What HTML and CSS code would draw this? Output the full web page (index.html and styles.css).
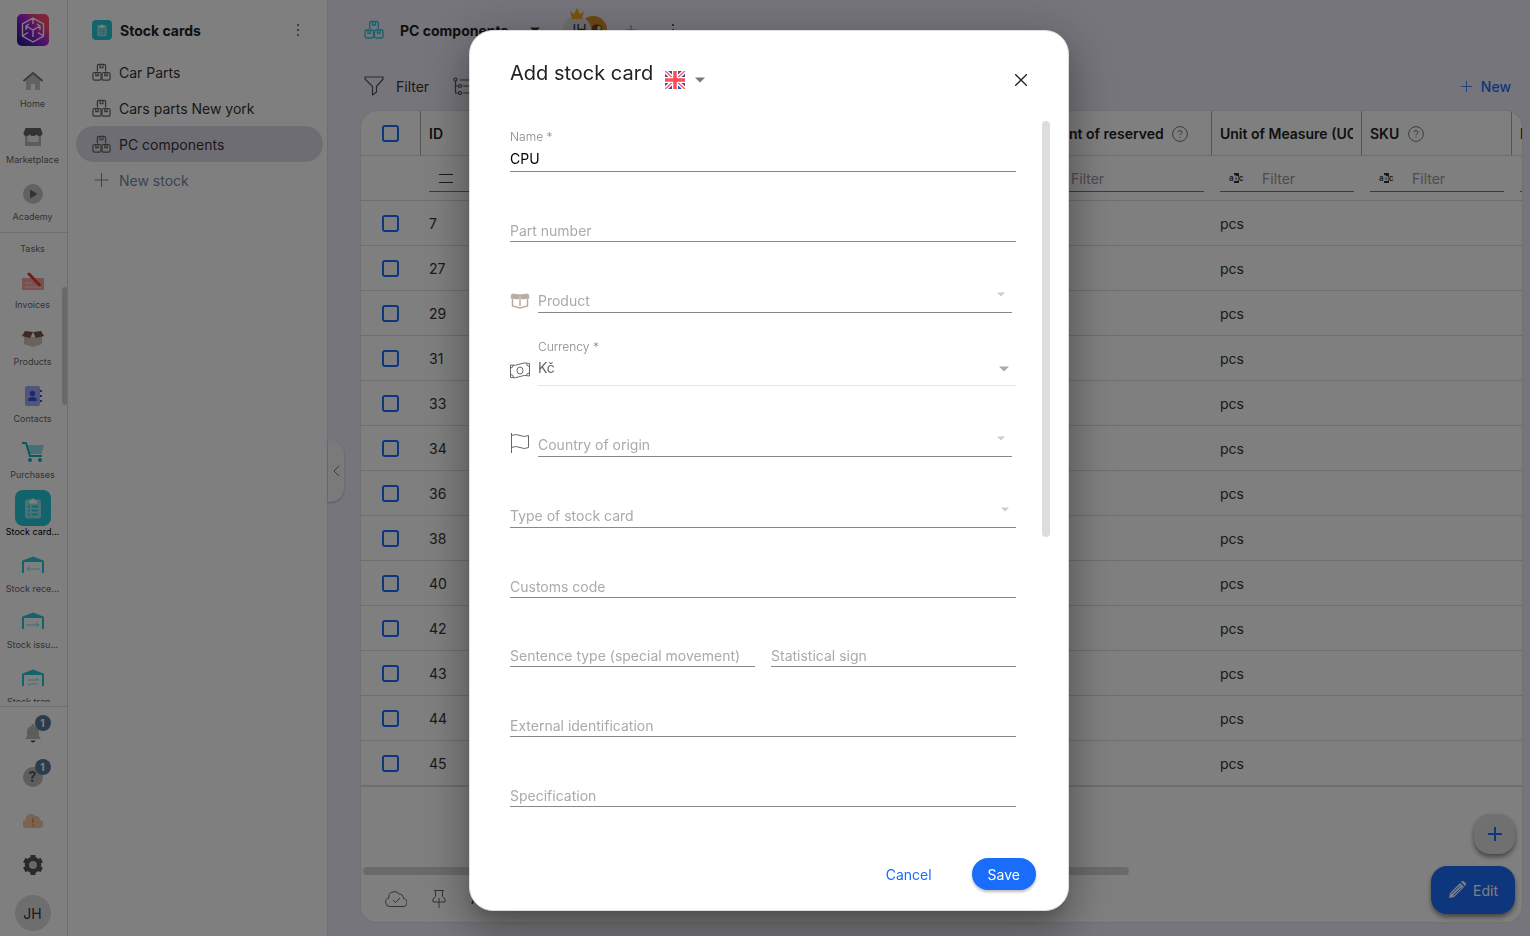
FILE: index.html
```html
<!DOCTYPE html>
<html lang="en">
<head>
  <meta charset="UTF-8" />
  <meta name="viewport" content="width=device-width, initial-scale=1.0"/>
  <title>Stock cards</title>
  <link rel="stylesheet" href="styles.css">
</head>
<body>

  <svg class="sprite" aria-hidden="true">
    <symbol id="boxes" viewBox="0 0 20 20">
      <g fill="none" stroke="currentColor" stroke-width="1.3" stroke-linejoin="round">
        <path d="M5.7 9V3q0-1.5 1.5-1.5h5.6q1.500 0 1.500 1.500v6"/>
        <path d="M8.500 1.500v3.500h3V1.500"/>
        <rect x="1" y="10" width="8.500" height="8" rx="1.500"/>
        <rect x="10.500" y="10" width="8.500" height="8" rx="1.500"/>
        <path d="M4 10v3.300h2.500V10M13.500 10v3.300H16V10"/>
      </g>
    </symbol>
    <symbol id="clipboard" viewBox="0 0 20 24">
      <rect x="2" y="3.500" width="16" height="19" rx="2" fill="#fff" fill-opacity=".5"/>
      <path d="M6 4.500h2a2 2 0 0 1 4 0h2v3H6z" fill="#fff"/>
      <path d="M5 10.500h2M5 14.500h2M5 18.500h2" stroke="#26c6da" stroke-width="1.600"/>
      <path d="M9 10.500h6M9 14.500h6M9 18.500h6" stroke="#26c6da" stroke-width="1.600"/>
    </symbol>
    <symbol id="garage" viewBox="0 0 22 18">
      <path d="M1 17V5.500L11 1.500l10 4V17" fill="none" stroke="#26c6da" stroke-width="2"/>
      <path d="M1 6l10-5 10 5z" fill="#26c6da"/>
    </symbol>
    <symbol id="caret" viewBox="0 0 10 6">
      <path d="M0 .5h10L5 5.500z" fill="currentColor"/>
    </symbol>
    <symbol id="plus" viewBox="0 0 14 14">
      <path d="M7 0v14M0 7h14" stroke="currentColor" fill="none"/>
    </symbol>
    <symbol id="help" viewBox="0 0 16 16">
      <circle cx="8" cy="8" r="7.400" fill="none" stroke="currentColor"/>
      <path d="M6 6.300Q6 4.500 8 4.500t2 1.800q0 1-1 1.500T8 9.300M8 10.700v1.200" fill="none" stroke="currentColor"/>
    </symbol>
    <symbol id="dots" viewBox="0 0 4 14">
      <circle cx="2" cy="2" r="1" fill="currentColor"/><circle cx="2" cy="7" r="1" fill="currentColor"/><circle cx="2" cy="12" r="1" fill="currentColor"/>
    </symbol>
  </svg>

  <div class="app">
    <nav class="rail">
      <a class="logo" href="#" aria-label="Dashboard">
        <svg width="24" height="26" viewBox="0 0 24 26" fill="none" stroke="#fff" stroke-width="1.400">
          <path d="M12 1l10.500 6v12L12 25 1.500 19V7zM12 1v6M5 9l7 4 7-4M12 13v7M2 18.500l5-3M22 18.500l-5-3M8 7l-3 2v4M16 7l3 2v4"/>
        </svg>
      </a>
      <div class="rail-group">
        <a class="rail-item" href="#">
          <svg width="22" height="20" viewBox="0 0 22 20"><path d="M4 9l7-6 7 6v10h-5v-6H9v6H4z" fill="#c4c4c4"/><path d="M1.500 10L11 2l9.500 8" fill="none" stroke="#777" stroke-width="2"/></svg>
          <span>Home</span>
        </a>
        <a class="rail-item" href="#">
          <svg width="20" height="20" viewBox="0 0 20 20"><path d="M2 8h16v11H2z" fill="#b8b8b8"/><path d="M4.500 8h11v7h-11z" fill="#eee"/><path d="M2.500 1h15L19.500 6q0 3-3 3-2 0-3-1.500Q12 9 10 9T6.500 7.500Q5.500 9 3.500 9 .5 9 .5 6z" fill="#666"/></svg>
          <span>Marketplace</span>
        </a>
        <a class="rail-item" href="#">
          <svg width="20" height="20" viewBox="0 0 20 20"><circle cx="10" cy="10" r="10" fill="#c4c4c4"/><path d="M7 5.500l7.500 4.500L7 14.500z" fill="#666"/></svg>
          <span>Academy</span>
        </a>
      </div>
      <div class="rail-scroll">
        <div class="rail-list">
          <a class="rail-item" href="#"><svg width="20" height="20" aria-hidden="true"></svg><span>Tasks</span></a>
          <a class="rail-item" href="#">
            <svg width="22" height="20" viewBox="0 0 22 20"><path d="M0 6h22v12H0z" fill="#f5a3a3"/><path d="M3 11h7M3 15h16" stroke="#fff" stroke-opacity=".6"/><path d="M7 2l10.500 11" stroke="#e53935" stroke-width="3" stroke-linecap="round"/></svg>
            <span>Invoices</span>
          </a>
          <a class="rail-item" href="#">
            <svg width="22" height="20" viewBox="0 0 22 20"><path d="M2 6l9 2 9-2v9l-9 3-9-3z" fill="#d0c4bc"/><path d="M3 2l8 1-3 6-8-2zM19 2l-8 1 3 6 8-2z" fill="#795548"/></svg>
            <span>Products</span>
          </a>
          <a class="rail-item" href="#">
            <svg width="20" height="20" viewBox="0 0 20 20"><rect x="2" width="15" height="20" rx="2" fill="#a0acf5"/><path d="M18 4v12" stroke="#3d50e0" stroke-width="2" stroke-dasharray="2 3"/><circle cx="9.500" cy="7.500" r="2.700" fill="#3d50e0"/><path d="M5 15q0-4 4.500-4t4.500 4z" fill="#3d50e0"/></svg>
            <span>Contacts</span>
          </a>
          <a class="rail-item" href="#">
            <svg width="22" height="20" viewBox="0 0 22 20"><path d="M5 3h17l-2.500 9H7z" fill="#8be0ea"/><path d="M0 1h4l4 13h12" fill="none" stroke="#17b1c4" stroke-width="2"/><circle cx="8" cy="18" r="2" fill="#17b1c4"/><circle cx="18" cy="18" r="2" fill="#17b1c4"/></svg>
            <span>Purchases</span>
          </a>
          <a class="rail-item active" href="#">
            <i class="tile"><svg width="20" height="24"><use href="#clipboard"/></svg></i>
            <span>Stock card...</span>
          </a>
          <a class="rail-item" href="#">
            <svg width="22" height="20" viewBox="0 0 22 20"><use href="#garage" width="22" height="18"/><path d="M18 13H6M8 11l-3 2 3 2" fill="none" stroke="#7adfea"/></svg>
            <span>Stock rece...</span>
          </a>
          <a class="rail-item" href="#">
            <svg width="22" height="20" viewBox="0 0 22 20"><use href="#garage" width="22" height="18"/><path d="M4 13h12M14 11l3 2-3 2" fill="none" stroke="#7adfea"/></svg>
            <span>Stock issu...</span>
          </a>
          <a class="rail-item" href="#">
            <svg width="22" height="20" viewBox="0 0 22 20"><use href="#garage" width="22" height="18"/><path d="M6 11h10l-2-2M16 15H6l2 2" fill="none" stroke="#7adfea"/></svg>
            <span>Stock tran...</span>
          </a>
        </div>
        <div class="rail-thumb"></div>
      </div>
      <div class="rail-bottom">
        <button class="rail-button" aria-label="Notifications">
          <svg width="20" height="20" viewBox="0 0 20 20"><path d="M2 16l2-3V9q0-5 4.500-6V1h3v2Q16 4 16 9v4l2 3z" fill="#bbb"/><path d="M7.500 17.500h5q-.5 2-2.500 2t-2.500-2z" fill="#555"/></svg>
          <span class="badge">1</span>
        </button>
        <button class="rail-button" aria-label="Help">
          <i class="question">?</i>
          <span class="badge">1</span>
        </button>
        <button class="rail-button" aria-label="Sync status">
          <svg width="20" height="16" viewBox="0 0 20 16"><path d="M4 15a4 4 0 0 1-1-8 5 5 0 0 1 9-4 4 4 0 0 1 5 4 4 4 0 0 1-1 8z" fill="#f3c6a5"/><path d="M10 5v5M10 11.500v2" stroke="#ef8a3c" stroke-width="1.600"/></svg>
        </button>
        <button class="rail-button" aria-label="Settings">
          <svg width="20" height="20" viewBox="0 0 20 20"><circle cx="10" cy="10" r="6" fill="none" stroke="#555" stroke-width="4.500"/><path d="M10 0v4M10 16v4M1.300 5l3.500 2M15.200 13l3.500 2M1.300 15l3.500-2M15.200 7l3.500-2" stroke="#555" stroke-width="5"/><circle cx="10" cy="10" r="3" fill="#ccc"/></svg>
        </button>
        <button class="profile">JH</button>
      </div>
    </nav>

    <aside class="sidebar">
      <header class="sidebar-head">
        <i class="mini-tile"><svg width="12" height="14"><use href="#clipboard"/></svg></i>
        <strong>Stock cards</strong>
        <button aria-label="More"><svg width="4" height="14"><use href="#dots"/></svg></button>
      </header>
      <a class="side-link" href="#"><svg width="19" height="19"><use href="#boxes"/></svg>Car Parts</a>
      <a class="side-link" href="#"><svg width="19" height="19"><use href="#boxes"/></svg>Cars parts New york</a>
      <a class="side-link selected" href="#"><svg width="19" height="19"><use href="#boxes"/></svg>PC components</a>
      <a class="side-link new-stock" href="#"><svg width="19" height="14"><use href="#plus"/></svg>New stock</a>
    </aside>

    <main class="main">
      <button class="collapse" aria-label="Collapse panel">
        <svg width="8" height="12" viewBox="0 0 8 12"><path d="M7 1L2 6l5 5" fill="none" stroke="currentColor"/></svg>
      </button>
      <header class="page-head">
        <svg class="teal" width="20" height="20"><use href="#boxes"/></svg>
        <h1>PC components</h1>
        <svg width="10" height="6"><use href="#caret"/></svg>
        <div class="people">
          <span class="person">JH</span>
          <span class="person robot"><svg width="28" height="28" viewBox="0 0 28 28"><path d="M13 10q6-4 9 1v6h-9z" fill="#8a3b1c"/><circle cx="20" cy="12" r="2.500" fill="#ffd9a0" stroke="#333"/></svg></span>
          <svg class="crown" width="14" height="12" viewBox="0 0 14 12"><path d="M2 11L0 3l4 3 3-6 3 6 4-3-2 8z" fill="#f5a623"/></svg>
        </div>
        <svg class="blue" width="10" height="10"><use href="#plus"/></svg>
        <svg class="more" width="4" height="14"><use href="#dots"/></svg>
      </header>
      <div class="toolbar">
        <button><svg width="20" height="20" viewBox="0 0 20 20"><path d="M1 1h18v2l-6.500 7.500V16l-4 3v-8.500L1 3z" fill="none" stroke="currentColor" stroke-width="1.200" stroke-linejoin="round"/></svg>Filter</button>
        <button aria-label="Group"><svg width="20" height="18" viewBox="0 0 20 18"><g fill="none" stroke="currentColor" stroke-width="1.200"><circle cx="2.500" cy="2.500" r="1.500"/><path d="M2.500 4v12H5M2.500 9H5M7 3h13M10 9h10M10 16h10"/><circle cx="7" cy="9" r="1.500"/><circle cx="7" cy="16" r="1.500"/></g></svg></button>
        <button class="new"><svg width="11" height="11"><use href="#plus"/></svg>New</button>
      </div>

      <section class="card">
        <table>
          <colgroup>
            <col class="col-check"><col class="col-std"><col><col class="col-reserved"><col class="col-std"><col class="col-std"><col class="col-last">
          </colgroup>
          <thead>
            <tr>
              <th class="check"><input type="checkbox" aria-label="Select all"></th>
              <th>ID</th>
              <th></th>
              <th>Amount of reserved <svg width="16" height="16"><use href="#help"/></svg></th>
              <th><div class="clip">Unit of Measure (UOM)</div></th>
              <th>SKU <svg width="16" height="16"><use href="#help"/></svg></th>
              <th>L</th>
            </tr>
            <tr class="filters">
              <td></td>
              <td><div class="filter"><svg width="16" height="9" viewBox="0 0 16 9"><path d="M1 .5h14M1 8.500h14" stroke="currentColor"/></svg><input aria-label="Filter ID"></div></td>
              <td></td>
              <td><div class="filter"><svg width="16" height="9" viewBox="0 0 16 9"><path d="M1 .5h14M1 8.500h14" stroke="currentColor"/></svg><input placeholder="Filter" aria-label="Filter reserved"></div></td>
              <td><div class="filter"><span class="abc">a<b>b</b>c</span><input placeholder="Filter" aria-label="Filter unit"></div></td>
              <td><div class="filter"><span class="abc">a<b>b</b>c</span><input placeholder="Filter" aria-label="Filter SKU"></div></td>
              <td><div class="filter"></div></td>
            </tr>
          </thead>
          <tbody>
            <tr><td class="check"><input type="checkbox" aria-label="Select 7"></td><td>7</td><td></td><td></td><td>pcs</td><td></td><td></td></tr>
            <tr><td class="check"><input type="checkbox" aria-label="Select 27"></td><td>27</td><td></td><td></td><td>pcs</td><td></td><td></td></tr>
            <tr><td class="check"><input type="checkbox" aria-label="Select 29"></td><td>29</td><td></td><td></td><td>pcs</td><td></td><td></td></tr>
            <tr><td class="check"><input type="checkbox" aria-label="Select 31"></td><td>31</td><td></td><td></td><td>pcs</td><td></td><td></td></tr>
            <tr><td class="check"><input type="checkbox" aria-label="Select 33"></td><td>33</td><td></td><td></td><td>pcs</td><td></td><td></td></tr>
            <tr><td class="check"><input type="checkbox" aria-label="Select 34"></td><td>34</td><td></td><td></td><td>pcs</td><td></td><td></td></tr>
            <tr><td class="check"><input type="checkbox" aria-label="Select 36"></td><td>36</td><td></td><td></td><td>pcs</td><td></td><td></td></tr>
            <tr><td class="check"><input type="checkbox" aria-label="Select 38"></td><td>38</td><td></td><td></td><td>pcs</td><td></td><td></td></tr>
            <tr><td class="check"><input type="checkbox" aria-label="Select 40"></td><td>40</td><td></td><td></td><td>pcs</td><td></td><td></td></tr>
            <tr><td class="check"><input type="checkbox" aria-label="Select 42"></td><td>42</td><td></td><td></td><td>pcs</td><td></td><td></td></tr>
            <tr><td class="check"><input type="checkbox" aria-label="Select 43"></td><td>43</td><td></td><td></td><td>pcs</td><td></td><td></td></tr>
            <tr><td class="check"><input type="checkbox" aria-label="Select 44"></td><td>44</td><td></td><td></td><td>pcs</td><td></td><td></td></tr>
            <tr><td class="check"><input type="checkbox" aria-label="Select 45"></td><td>45</td><td></td><td></td><td>pcs</td><td></td><td></td></tr>
          </tbody>
        </table>
        <div class="table-thumb"></div>
        <footer class="table-foot">
          <svg width="22" height="18" viewBox="0 0 22 18"><g fill="none" stroke="currentColor"><path d="M5 16.500a4.300 4.300 0 0 1-1-8.500A4.500 4.500 0 0 1 8 2q4-1.500 6 2 4 0 4.500 4.500a4 4 0 0 1-1.500 8z"/><path d="M8 10l2.500 2.500L15 8"/></g></svg>
          <svg width="16" height="18" viewBox="0 0 16 18"><path d="M3 .5h10M4.500 .5v6L2 9v3h12V9l-2.500-2.500v-6M8 8v10" fill="none" stroke="currentColor"/></svg>
          <span>All</span>
        </footer>
      </section>

      <div class="floating">
        <button class="fab-add" aria-label="Add"><svg width="14" height="14"><use href="#plus"/></svg></button>
        <button class="fab-edit"><svg width="18" height="18" viewBox="0 0 18 18"><path d="M1 17l1-5L12 2l4 4L6 16zM13 1l1-1q1-.5 2 .5l1.500 1.500q1 1 .5 2l-1 1z" fill="#fff"/><path d="M3.500 13L12 4.500M5.500 14.500L13.500 6.500" stroke="#1a6cfa"/></svg>Edit</button>
      </div>
    </main>
  </div>

  <div class="overlay">
    <form class="dialog" role="dialog" aria-labelledby="dialog-title">
      <header class="dialog-head">
        <h2 id="dialog-title">Add stock card</h2>
        <button class="language" type="button" aria-label="Language">
          <svg width="20" height="18" viewBox="0 0 20 18"><path fill="#4350a5" d="M0 0h20v18H0z"/><path d="M0 0l20 18M20 0L0 18" stroke="#fff" stroke-width="4"/><path d="M0 0l20 18M20 0L0 18" stroke="#ff4b55" stroke-width="1.300"/><path d="M10 0v18M0 9h20" stroke="#fff" stroke-width="6"/><path d="M10 0v18M0 9h20" stroke="#ff4b55" stroke-width="3.500"/></svg>
          <svg width="10" height="6"><use href="#caret"/></svg>
        </button>
        <button class="close" type="button" aria-label="Close"><svg width="12" height="12" viewBox="0 0 12 12"><path d="M0 0l12 12M12 0L0 12" stroke="#222" stroke-width="1.300"/></svg></button>
      </header>

      <div class="dialog-body">
        <div class="fields">
          <div class="field labelled first">
            <label for="name">Name *</label>
            <input class="line" id="name" value="CPU">
          </div>
          <div class="field"><input class="line" placeholder="Part number" aria-label="Part number"></div>
          <div class="field drop with-icon narrow">
            <svg class="field-icon" width="20" height="16" viewBox="0 0 20 16"><path d="M2 1l8 1-2 4-7-1zM18 1l-8 1 2 4 7-1z" fill="#bcaaa4" stroke="#bcaaa4"/><path d="M2.500 6v7l7.500 2 7.500-2V6M10 4v9" fill="none" stroke="#bcaaa4" stroke-width="1.500"/></svg>
            <div class="line">
              <select aria-label="Product"><option>Product</option></select>
              <svg width="8" height="5"><use href="#caret"/></svg>
            </div>
          </div>
          <div class="field labelled with-icon currency">
            <svg class="field-icon" width="20" height="17" viewBox="0 0 20 17"><g fill="none" stroke="#666"><path d="M.5 3q5 1 9.500-1t9.500-.5V14q-5-1.500-9.500.5T.5 15.500z"/><ellipse cx="10" cy="8.500" rx="3" ry="3.500"/><path d="M.5 6Q3 6 3.500 3M.5 12.500q3 0 3 3M19.500 4.500q-3 0-3-3M19.500 11q-3 0-3 2.500"/></g></svg>
            <label for="currency">Currency *</label>
            <div class="line">
              <select id="currency"><option>Kč</option></select>
              <svg width="10" height="6"><use href="#caret"/></svg>
            </div>
          </div>
          <div class="field drop with-icon narrow">
            <svg class="field-icon" width="20" height="20" viewBox="0 0 20 20"><path d="M1.500 0v20M1.500 2.500q4-2 8.500 0t8.500 0v12q-4 2-8.500 0t-8.500 0" fill="none" stroke="#666"/></svg>
            <div class="line">
              <select aria-label="Country of origin"><option>Country of origin</option></select>
              <svg width="8" height="5"><use href="#caret"/></svg>
            </div>
          </div>
          <div class="field drop">
            <div class="line">
              <select aria-label="Type of stock card"><option>Type of stock card</option></select>
              <svg width="8" height="5"><use href="#caret"/></svg>
            </div>
          </div>
          <div class="field"><input class="line" placeholder="Customs code" aria-label="Customs code"></div>
          <div class="field pair">
            <input class="line" placeholder="Sentence type (special movement)" aria-label="Sentence type (special movement)">
            <input class="line" placeholder="Statistical sign" aria-label="Statistical sign">
          </div>
          <div class="field"><input class="line" placeholder="External identification" aria-label="External identification"></div>
          <div class="field"><input class="line" placeholder="Specification" aria-label="Specification"></div>
        </div>
        <div class="dialog-thumb"></div>
      </div>

      <footer class="dialog-foot">
        <button class="cancel" type="button">Cancel</button>
        <button class="save" type="button">Save</button>
      </footer>
    </form>
  </div>

</body>
</html>
```
FILE: styles.css
```css
:root {
  --blue: #1a6cfa;
  --teal: #26c6da;
  --text: #333;
  --border: #dcdcdc;
}

* {
  box-sizing: border-box;
}

body {
  margin: 0;
  height: 100vh;
  overflow: hidden;
  font-family: Inter, sans-serif;
  font-size: 14px;
  color: var(--text);
  background: #edebf8;
}

a {
  color: inherit;
  text-decoration: none;
}

button,
input,
select {
  font: inherit;
  color: inherit;
  border: 0;
  background: none;
  padding: 0;
}

button {
  display: flex;
  align-items: center;
  cursor: pointer;
}

svg {
  flex: none;
}

.sprite {
  position: absolute;
  width: 0;
  height: 0;
}

.app {
  display: flex;
  height: 100vh;
}

/* icon rail */
.rail {
  width: 68px;
  flex: none;
  display: flex;
  flex-direction: column;
  align-items: center;
  background: #fff;
  border-right: 1px solid var(--border);
}

.logo {
  width: 32px;
  height: 32px;
  margin: 14px 2px 14px 0;
  display: flex;
  justify-content: center;
  align-items: center;
  border-radius: 5px;
  background: linear-gradient(50deg, #1c1c90 5%, #a020e0 50%, #ff4a70 80%);
}

.rail-group {
  width: 100%;
  height: 173px;
  padding-bottom: 2px;
  border-bottom: 1px solid var(--border);
  display: flex;
  flex-direction: column;
}

.rail-item {
  flex: 1;
  display: flex;
  flex-direction: column;
  align-items: center;
  justify-content: flex-end;
  gap: 7px;
  padding: 0 2px 7px 0;
  font-size: 9px;
  line-height: 12px;
  color: #666;
}

.rail-item.active {
  gap: 0;
  color: #000;
}

.tile {
  width: 36px;
  height: 36px;
  flex: none;
  display: flex;
  justify-content: center;
  align-items: center;
  border-radius: 8px;
  background: var(--teal);
}

.rail-scroll {
  position: relative;
  flex: 1;
  width: 100%;
  min-height: 0;
  overflow: hidden;
  margin-bottom: 4px;
}

.rail-list {
  height: 510px;
  margin-top: -28px;
  display: flex;
  flex-direction: column;
}

.rail-thumb {
  position: absolute;
  top: 54px;
  right: 0;
  width: 5px;
  height: 118px;
  border-radius: 3px;
  background: #d5d5d5;
}

.rail-bottom {
  width: 100%;
  border-top: 1px solid var(--border);
  padding: 4px 2px 5px 0;
  display: flex;
  flex-direction: column;
  align-items: center;
}

.rail-button {
  position: relative;
  width: 44px;
  height: 44px;
  justify-content: center;
}

.badge {
  position: absolute;
  top: 4px;
  right: 4px;
  width: 16px;
  height: 16px;
  border-radius: 50%;
  background: #5b7799;
  color: #fff;
  font-size: 10px;
  font-weight: 700;
  line-height: 16px;
}

.question {
  width: 20px;
  height: 20px;
  border-radius: 50%;
  background: #bbb;
  color: #555;
  font-weight: 700;
  font-style: normal;
  line-height: 20px;
}

.profile {
  width: 36px;
  height: 36px;
  margin: 8px 0 0;
  justify-content: center;
  border-radius: 50%;
  background: #ddd;
}

/* list of stocks */
.sidebar {
  width: 260px;
  flex: none;
  padding: 6px 4px 0 8px;
  background: #fff;
  border-right: 1px solid var(--border);
}

.sidebar-head {
  display: flex;
  align-items: center;
  gap: 8px;
  height: 48px;
  padding: 0 23px 0 16px;
  color: #222;
}

.sidebar-head button {
  margin-left: auto;
  color: #555;
}

.mini-tile {
  width: 20px;
  height: 20px;
  display: flex;
  justify-content: center;
  align-items: center;
  border-radius: 4px;
  background: var(--teal);
}

.side-link {
  display: flex;
  align-items: center;
  gap: 8px;
  height: 36px;
  padding-left: 16px;
  border-radius: 18px;
}

.side-link svg {
  color: #666;
}

.side-link.selected {
  background: #dddbe9;
}

.side-link.new-stock,
.side-link.new-stock svg {
  color: #7389a1;
}

/* page */
.main {
  position: relative;
  flex: 1;
  min-width: 0;
  display: flex;
  flex-direction: column;
  padding: 0 8px 14px 33px;
}

.collapse {
  position: absolute;
  top: 440px;
  left: 0;
  width: 16px;
  height: 62px;
  justify-content: center;
  border-radius: 0 14px 14px 0;
  background: #f4f4f4;
  box-shadow: 0 1px 2px #aaa;
  color: #777;
}

.page-head {
  display: flex;
  align-items: center;
  height: 60px;
  padding-left: 3px;
  gap: 16px;
}

.page-head h1 {
  margin: 0 6px 0 0;
  font-size: 14px;
  font-weight: 700;
  color: #222;
}

.teal {
  color: var(--teal);
}

.blue {
  color: var(--blue);
}

.more {
  margin-left: 19px;
}

.people {
  position: relative;
  display: flex;
  margin: 0 3px 0 7px;
}

.person {
  width: 28px;
  height: 28px;
  border-radius: 50%;
  background: #ddd;
  line-height: 28px;
  text-align: center;
  z-index: 1;
}

.person.robot {
  margin-left: -12px;
  background: #d9902a;
  z-index: 0;
}

.crown {
  position: absolute;
  top: -8px;
  left: 7px;
  z-index: 2;
}

.toolbar {
  display: flex;
  align-items: center;
  gap: 24px;
  height: 51px;
  padding: 1px 11px 0 3px;
}

.toolbar button {
  gap: 12px;
}

.toolbar button svg {
  color: #555;
}

.toolbar .new {
  margin-left: auto;
  gap: 9px;
  font-weight: 500;
}

.toolbar .new,
.toolbar .new svg {
  color: var(--blue);
}

.card {
  flex: 1;
  min-height: 0;
  display: flex;
  flex-direction: column;
  overflow: hidden;
  border-radius: 16px;
  background: #fff;
  box-shadow: 0 0 0 1px #e0e0e0;
}

table {
  width: 100%;
  table-layout: fixed;
  border-collapse: separate;
  border-spacing: 0;
}

.col-check {
  width: 60px;
}

.col-std {
  width: 150px;
}

.col-reserved {
  width: 191px;
}

.col-last {
  width: 10px;
}

th,
tr.filters td,
tbody td {
  height: 45px;
  padding: 0 8px;
  overflow: hidden;
  white-space: nowrap;
  text-align: left;
  border-bottom: 1px solid var(--border);
}

th {
  border-right: 1px solid #aaa;
  color: #222;
  font-weight: 600;
}

th:last-child {
  border-right: 0;
}

tr th:last-child,
tr.filters td:last-child {
  padding-right: 0;
}

th svg {
  margin-left: 5px;
  vertical-align: -3px;
  color: #777;
}

.clip {
  overflow: hidden;
}

.check {
  padding: 0 0 0 21px;
}

.check input {
  display: block;
  appearance: none;
  width: 17px;
  height: 17px;
  margin: 0;
  border: 2px solid var(--blue);
  border-radius: 3px;
}

.filter {
  display: flex;
  align-items: center;
  gap: 17px;
  height: 26px;
  margin-top: 2px;
  padding-left: 9px;
  border-bottom: 1px solid #777;
}

.filter input {
  flex: 1;
  min-width: 0;
}

.filter input::placeholder {
  color: #999;
}

.abc {
  width: 16px;
  font-size: 8px;
  font-weight: 600;
  line-height: 9px;
}

.abc b {
  background: #333;
  color: #fff;
}

tbody tr:last-child td {
  height: 46px;
  border-bottom-width: 2px;
}

.table-thumb {
  width: 66%;
  height: 8px;
  margin: auto 0 0 2px;
  flex: none;
  border-radius: 4px;
  background: #d5d5d5;
}

.table-foot {
  flex: none;
  height: 47px;
  display: flex;
  align-items: center;
  gap: 24px;
  padding-left: 24px;
}

.table-foot svg {
  color: #666;
}

/* floating actions over the table */
.floating {
  position: absolute;
  right: 15px;
  bottom: 22px;
  display: flex;
  flex-direction: column;
  align-items: flex-end;
  gap: 12px;
}

.floating button {
  justify-content: center;
  border-radius: 16px;
  box-shadow: 0 3px 5px #888;
}

.fab-add {
  width: 41px;
  height: 40px;
  background: #e0e0e0;
  color: var(--blue);
}

.fab-add svg {
  stroke-width: 2;
}

.fab-edit {
  width: 84px;
  height: 48px;
  gap: 7px;
  background: var(--blue);
  color: #fff;
}

/* dialog */
.overlay {
  position: fixed;
  inset: 0;
  z-index: 10;
  display: flex;
  justify-content: center;
  align-items: center;
  padding: 5px 0 0 8px;
  background: rgba(0, 0, 0, 0.5);
}

.dialog {
  width: 600px;
  max-width: 90%;
  height: calc(100vh - 55px);
  display: flex;
  flex-direction: column;
  border: 1px solid #ddd;
  border-radius: 24px;
  background: #fff;
  box-shadow: 0 11px 15px -7px rgba(0, 0, 0, 0.2), 0 24px 38px 3px rgba(0, 0, 0, 0.14), 0 9px 46px 8px rgba(0, 0, 0, 0.2);
}

.dialog-head {
  flex: none;
  display: flex;
  height: 90px;
  padding: 29px 41px 0 40px;
  gap: 12px;
}

.dialog-head h2 {
  margin: 0;
  font-size: 20px;
  font-weight: 400;
  line-height: 26px;
  color: #222;
}

.language {
  height: 40px;
  gap: 10px;
  color: #777;
}

.close {
  height: 40px;
  margin-left: auto;
}

.dialog-body {
  flex: 1;
  min-height: 0;
  display: flex;
  gap: 26px;
  padding: 0 18px 0 40px;
  overflow: hidden;
}

.dialog-thumb {
  width: 8px;
  height: 58%;
  border-radius: 4px;
  background: #ddd;
}

.fields {
  flex: 1;
  min-width: 0;
}

.field {
  height: 70px;
  display: flex;
  flex-direction: column;
  justify-content: flex-end;
}

.field.first {
  height: 51px;
}

.field label {
  font-size: 12px;
  font-weight: 300;
  line-height: 16px;
  color: #888;
}

.line {
  width: 100%;
  height: 22px;
  border-bottom: 1px solid #888;
  border-radius: 0;
  outline: 0;
}

.line::placeholder {
  color: #aaa;
}

.labelled .line {
  height: 27px;
  color: #000;
}

.field.drop {
  height: 71px;
}

.drop .line,
.currency .line {
  display: flex;
  height: 28px;
  padding-right: 7px;
  color: #ccc;
}

.drop .line svg {
  margin-top: 7px;
}

.field select {
  flex: 1;
  appearance: none;
  outline: 0;
  color: #aaa;
}

.drop select {
  padding-top: 4px;
}

.with-icon {
  position: relative;
  padding-left: 28px;
}

.field.narrow {
  padding-right: 4px;
}

.field-icon {
  position: absolute;
  left: 0;
  bottom: 4px;
}

.field.currency {
  height: 73px;
}

.currency .field-icon {
  bottom: 7px;
}

.currency .line {
  height: 31px;
  align-items: flex-start;
  border-color: #e5e5e5;
  color: #aaa;
}

.currency .line svg {
  margin-top: 11px;
}

.currency select {
  height: 24px;
  color: #666;
}

.field.pair {
  flex-direction: row;
  align-items: flex-end;
  gap: 16px;
  height: 69px;
}

.dialog-foot {
  flex: none;
  display: flex;
  justify-content: flex-end;
  align-items: center;
  gap: 40px;
  height: 72px;
  padding-right: 32px;
}

.cancel {
  color: var(--blue);
}

.save {
  height: 32px;
  padding: 0 16px;
  border-radius: 16px;
  background: var(--blue);
  color: #fff;
  box-shadow: 0 2px 3px #bbb;
}
```
